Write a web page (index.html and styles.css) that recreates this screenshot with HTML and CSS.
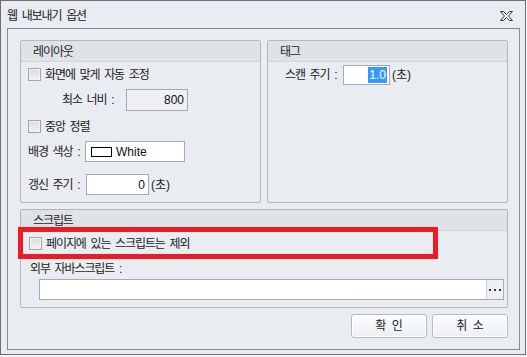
FILE: index.html
```html
<!DOCTYPE html>
<html lang="ko">
<head>
<meta charset="utf-8">
<title>웹 내보내기 옵션</title>
<link rel="stylesheet" href="styles.css">
</head>
<body>
<div class="window">
  <div class="titlebar">
    <span class="title">웹 내보내기 옵션</span>
    <svg class="close" width="13" height="10" viewBox="0 0 13 10">
      <polygon points="0.5,0.5 3.5,0.5 6.5,3.5 9.5,0.5 12.5,0.5 8.5,5 12.5,9.5 9.5,9.5 6.5,6.5 3.5,9.5 0.5,9.5 4.5,5" fill="#fafafa" stroke="#3a3a3a" stroke-width="1" stroke-linejoin="miter"/>
    </svg>
  </div>
  <div class="frame">
    <div class="top-row">
      <div class="group layout">
        <div class="group-head">레이아웃</div>
        <div class="group-body">
          <div class="row r1">
            <span class="check"></span><span class="check-label">화면에 맞게 자동 조정</span>
          </div>
          <div class="row r2">
            <span class="label lbl-min">최소 너비 :</span>
            <span class="input input-min disabled"><span class="num">800</span></span>
          </div>
          <div class="row r3">
            <span class="check"></span><span class="check-label">중앙 정렬</span>
          </div>
          <div class="row r4">
            <span class="label lbl-bg">배경 색상 :</span>
            <span class="input input-color"><span class="swatch"></span><span class="num">White</span></span>
          </div>
          <div class="row r5">
            <span class="label lbl-refresh">갱신 주기 :</span>
            <span class="input input-refresh"><span class="num">0</span></span>
            <span class="unit">(초)</span>
          </div>
        </div>
      </div>
      <div class="group tag">
        <div class="group-head">태그</div>
        <div class="group-body">
          <div class="row t1">
            <span class="label lbl-scan">스캔 주기 :</span>
            <span class="input input-scan"><span class="num selected">1.0</span></span>
            <span class="unit">(초)</span>
          </div>
        </div>
      </div>
    </div>
    <div class="group script">
      <div class="group-head">스크립트</div>
      <div class="group-body script-body">
        <div class="row s1">
          <span class="check"></span><span class="check-label">페이지에 있는 스크립트는 제외</span>
        </div>
        <div class="row s2">
          <span class="label">외부 자바스크립트 :</span>
        </div>
        <div class="input input-path">
          <span class="path-text"></span>
          <span class="browse">
            <svg width="12" height="3" viewBox="0 0 12 3">
              <rect x="0" y="0" width="2" height="2" fill="#333"/>
              <rect x="5" y="0" width="2" height="2" fill="#333"/>
              <rect x="10" y="0" width="2" height="2" fill="#333"/>
            </svg>
          </span>
        </div>
      </div>
    </div>
    <div class="buttons">
      <button class="btn">확 인</button>
      <button class="btn">취 소</button>
    </div>
  </div>
  <div class="annotation"></div>
</div>
</body>
</html>
```
FILE: styles.css
```css
html, body {
  margin: 0;
  padding: 0;
}
body {
  background: #f3f4f6;
  font-family: "Liberation Sans", "Noto Sans CJK KR", sans-serif;
  font-size: 12px;
  line-height: 16px;
  color: #222222;
  letter-spacing: -1.1px;
  word-spacing: 2.5px;
}
.window {
  position: relative;
  box-sizing: border-box;
  width: 526px;
  height: 355px;
  border: 1px solid #6b7177;
  background: #e9ecf0;
  display: flex;
  flex-direction: column;
}
.titlebar {
  height: 27px;
  flex: none;
  display: flex;
  align-items: center;
  justify-content: space-between;
  padding: 1px 12px 0 6px;
  box-sizing: border-box;
}
.title {
  padding-top: 1px;
}
.close {
  display: block;
  margin-top: 1px;
}
.frame {
  flex: 1;
  margin: 0 5px 4px 6px;
  border: 1px solid #858a8f;
  padding: 11px 11px 0 12px;
  display: flex;
  flex-direction: column;
}
.top-row {
  display: flex;
  gap: 6px;
  height: 163px;
}
.group {
  box-sizing: border-box;
  border: 1px solid #b4b7bc;
  border-radius: 2px;
  background: #e9ecf0;
  display: flex;
  flex-direction: column;
  overflow: hidden;
}
.layout, .tag {
  width: 241px;
}
.group-head {
  flex: none;
  background: #dfe2e7;
  border-bottom: 1px solid #d2d5da;
  padding-left: 12px;
  display: flex;
  align-items: center;
  padding-top: 1px;
  height: 19px;
}
.group-body {
  padding-left: 7px;
  display: flex;
  flex-direction: column;
}
.row {
  display: flex;
  align-items: center;
}
.r1 { margin-top: 6px; height: 13px; }
.r2 { margin-top: 8px; height: 22px; }
.r3 { margin-top: 9px; height: 13px; }
.r4 { margin-top: 8px; height: 21px; }
.r5 { margin-top: 12px; height: 21px; }
.check {
  box-sizing: border-box;
  width: 13px;
  height: 13px;
  flex: none;
  border: 1px solid #a3a5a8;
  background: linear-gradient(#d9dadc, #f3f3f4);
  box-shadow: inset 0 0 0 1px #f2f2f3;
}
.check-label {
  margin-left: 4px;
}
.label {
  flex: none;
}
.lbl-min { margin-left: 34px; width: 64px; }
.lbl-bg { width: 57px; }
.lbl-refresh { width: 58px; }
.input {
  box-sizing: border-box;
  border: 1px solid #a7abb0;
  background: #ffffff;
  display: flex;
  align-items: center;
  height: 100%;
}
.disabled {
  background: #eef0f3;
}
.num {
  letter-spacing: 0;
  word-spacing: 0;
  color: #111;
}
.input-min {
  width: 62px;
  justify-content: flex-end;
  padding-right: 3px;
}
.input-color {
  width: 100px;
  padding-left: 5px;
}
.swatch {
  box-sizing: border-box;
  width: 21px;
  height: 10px;
  border: 1px solid #000;
  background: #fff;
  margin-right: 4px;
}
.input-refresh {
  width: 63px;
  justify-content: flex-end;
  padding-right: 3px;
}
.unit {
  margin-left: 2px;
  letter-spacing: 0;
}
.t1 {
  margin-top: 3px;
  height: 20px;
  padding-left: 10px;
}
.lbl-scan { width: 58px; }
.input-scan {
  width: 47px;
  justify-content: flex-end;
  padding-right: 2px;
}
.selected {
  background: #3399ff;
  color: #fff;
  padding: 0 1px;
  line-height: 16px;
}
.script {
  margin-top: 6px;
  height: 99px;
}
.script-body {
  padding-left: 8px;
}
.s1 { margin-top: 6px; height: 13px; }
.s2 { margin-top: 11px; height: 16px; padding-left: 1px; }
.input-path {
  margin-top: 2px;
  margin-left: 10px;
  width: 465px;
  height: 21px;
  justify-content: space-between;
}
.browse {
  box-sizing: border-box;
  width: 17px;
  height: 100%;
  border-left: 1px solid #c6c9ce;
  background: #eef0f3;
  display: flex;
  align-items: center;
  justify-content: center;
  padding-top: 1px;
}
.browse svg { display: block; }
.buttons {
  margin-top: 6px;
  display: flex;
  justify-content: flex-end;
  gap: 5px;
}
.btn {
  box-sizing: border-box;
  width: 76px;
  height: 24px;
  border: 1px solid #b6babf;
  border-radius: 3px;
  background: linear-gradient(#fdfdfe, #eceff3);
  box-shadow: inset 0 0 0 1px #ffffff;
  font-family: "Liberation Sans", "Noto Sans CJK KR", sans-serif;
  font-size: 12px;
  letter-spacing: 0;
  word-spacing: 2px;
  color: #222222;
  padding: 0;
  line-height: 16px;
}
.annotation {
  position: absolute;
  left: 17px;
  top: 226px;
  width: 420px;
  height: 32px;
  box-sizing: border-box;
  border: 5px solid #ed1c24;
  pointer-events: none;
}
```
